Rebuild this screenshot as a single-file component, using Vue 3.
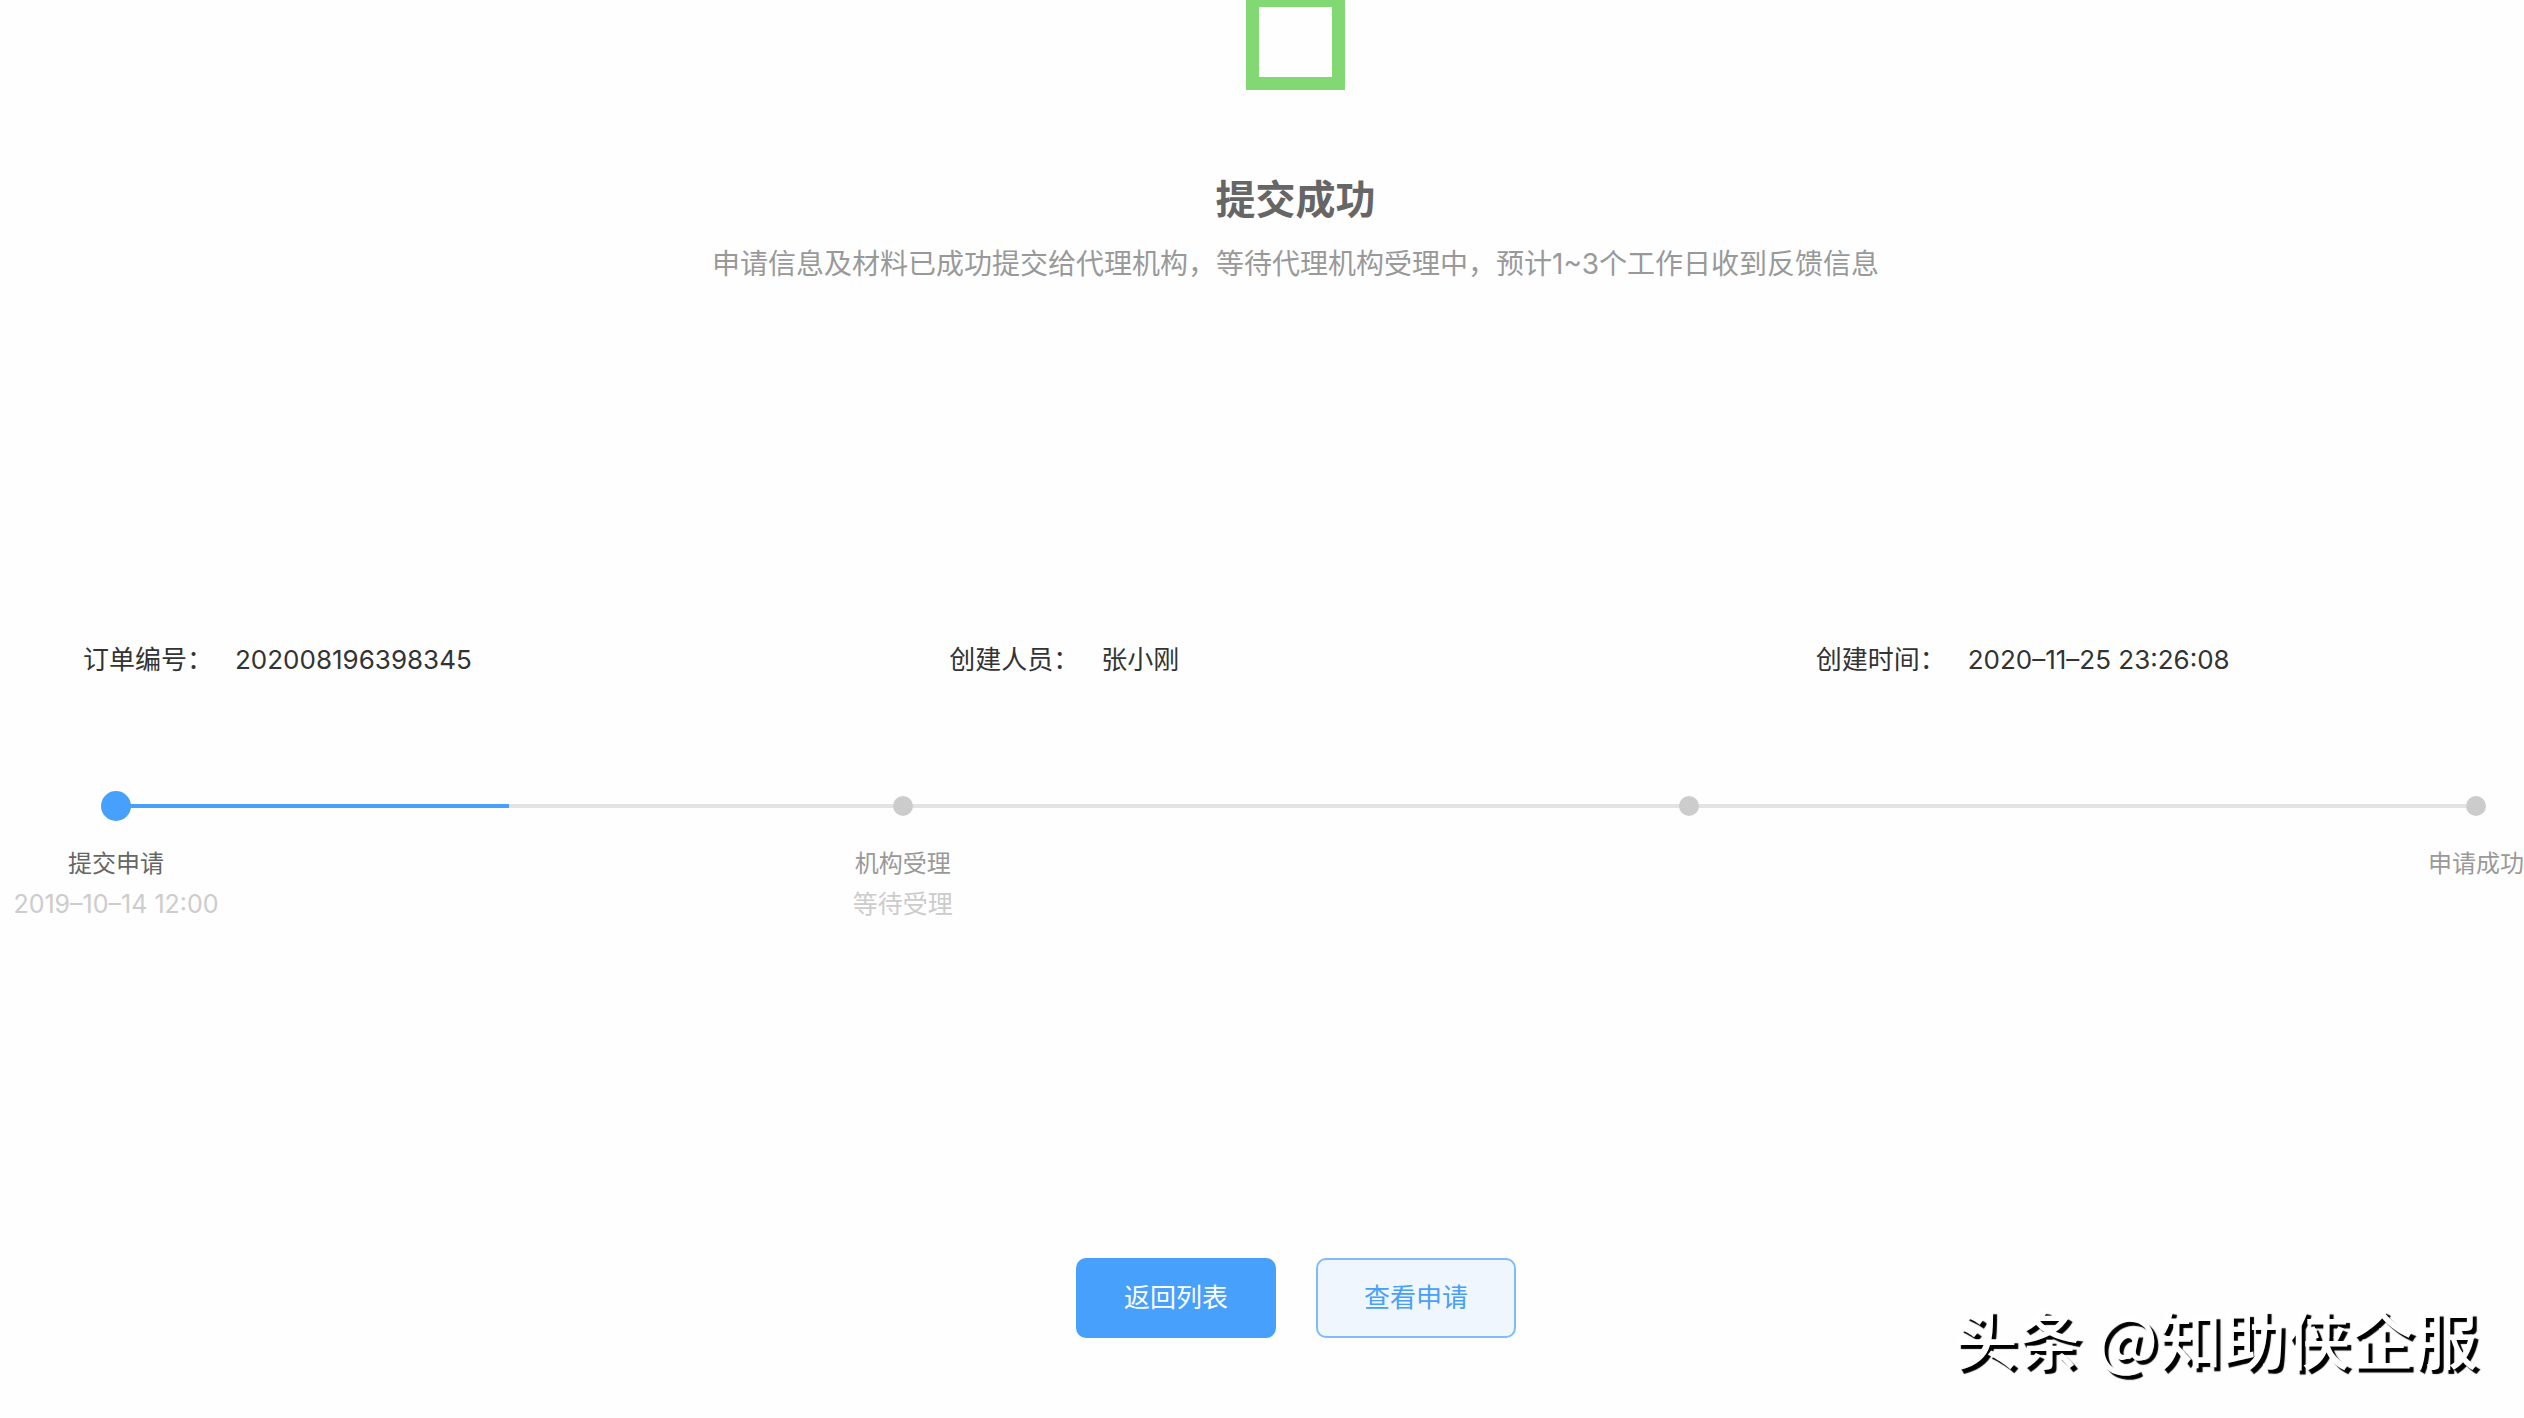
<script setup>
const details = [
  { label: '订单编号：', value: '202008196398345' },
  { label: '创建人员：', value: '张小刚' },
  { label: '创建时间：', value: '2020–11–25 23:26:08' },
]

const steps = [
  { title: '提交申请', note: '2019–10–14 12:00', active: true },
  { title: '机构受理', note: '等待受理' },
  { title: '', note: '' },
  { title: '申请成功', note: '' },
]
</script>

<template>
  <main class="page">
    <header class="result">
      <div class="result-icon"></div>
      <h1>提交成功</h1>
      <p>申请信息及材料已成功提交给代理机构，等待代理机构受理中，预计1~3个工作日收到反馈信息</p>
    </header>

    <dl class="details">
      <div v-for="item in details" :key="item.label" class="detail">
        <dt>{{ item.label }}</dt>
        <dd>{{ item.value }}</dd>
      </div>
    </dl>

    <ol class="steps">
      <li v-for="(step, i) in steps" :key="i" class="step" :class="{ active: step.active }">
        <span class="mark"><span class="dot"></span></span>
        <span class="step-title">{{ step.title }}</span>
        <span class="step-note">{{ step.note }}</span>
      </li>
    </ol>

    <div class="actions">
      <button type="button" class="btn primary">返回列表</button>
      <button type="button" class="btn plain">查看申请</button>
    </div>

    <div class="watermark">头条 @知助侠企服</div>
  </main>
</template>

<style>
body {
  margin: 0;
  background: #fefefe;
}
</style>

<style scoped>
.page {
  position: relative;
  box-sizing: border-box;
  min-height: 100vh;
  overflow: hidden;
  font-family: Inter, "Noto Sans CJK SC", sans-serif;
  color: #333;
}

.result {
  display: flex;
  flex-direction: column;
  align-items: center;
  padding-left: 67px;
}

.result-icon {
  box-sizing: border-box;
  width: 99px;
  height: 96px;
  margin-top: -6px;
  border: 13px solid #82d973;
}

h1 {
  margin: 80px 0 0;
  font-size: 40px;
  line-height: 60px;
  font-weight: 700;
  color: #666;
}

.result p {
  margin: 14px 0 0;
  font-size: 28px;
  line-height: 40px;
  color: #999;
}

.details {
  display: grid;
  grid-template-columns: 866fr 866fr 708fr;
  margin: 356px 0 0;
  padding-left: 83px;
  font-size: 26px;
  line-height: 40px;
}

.detail {
  display: flex;
  gap: 22px;
}

dt {
  width: 130px;
  white-space: nowrap;
}

dd {
  margin: 0;
}

.steps {
  position: relative;
  display: flex;
  justify-content: space-between;
  margin: 106px -62px 0 6px;
  padding: 0;
  list-style: none;
  background: linear-gradient(#e3e3e3, #e3e3e3) no-repeat 110px 18px / calc(100% - 220px) 4px;
}

.steps::before {
  content: "";
  position: absolute;
  top: 18px;
  left: 110px;
  width: calc((100% - 220px) / 6);
  height: 4px;
  background: #46a0fc;
}

.step {
  position: relative;
  display: flex;
  flex-direction: column;
  align-items: center;
  width: 220px;
  line-height: 40px;
}

.mark {
  display: flex;
  align-items: center;
  justify-content: center;
  height: 40px;
}

.dot {
  width: 20px;
  height: 20px;
  border-radius: 50%;
  background: #ccc;
}

.step-title {
  min-height: 40px;
  margin-top: 18px;
  font-size: 24px;
  color: #999;
}

.step-note {
  min-height: 40px;
  font-size: 25px;
  color: #ccc;
}

.active .dot {
  width: 30px;
  height: 30px;
  background: #46a0fc;
}

.active .step-title {
  color: #666;
}

.actions {
  display: flex;
  justify-content: center;
  gap: 40px;
  margin-top: 334px;
  padding-left: 68px;
}

.btn {
  box-sizing: border-box;
  width: 200px;
  height: 80px;
  padding: 0;
  border: 2px solid #46a0fc;
  border-radius: 10px;
  font-family: inherit;
  font-size: 26px;
  line-height: 40px;
  cursor: pointer;
}

.primary {
  background: #46a0fc;
  color: #fff;
}

.plain {
  border-color: #7ebcfb;
  background: #eff6fe;
  color: #46a0fc;
}

.watermark {
  position: absolute;
  right: 46px;
  bottom: 42px;
  font-family: "Noto Sans CJK SC", sans-serif;
  font-size: 64px;
  line-height: 80px;
  font-weight: 500;
  color: #fff;
  text-shadow: 4px 4px 1px #000;
}
</style>
